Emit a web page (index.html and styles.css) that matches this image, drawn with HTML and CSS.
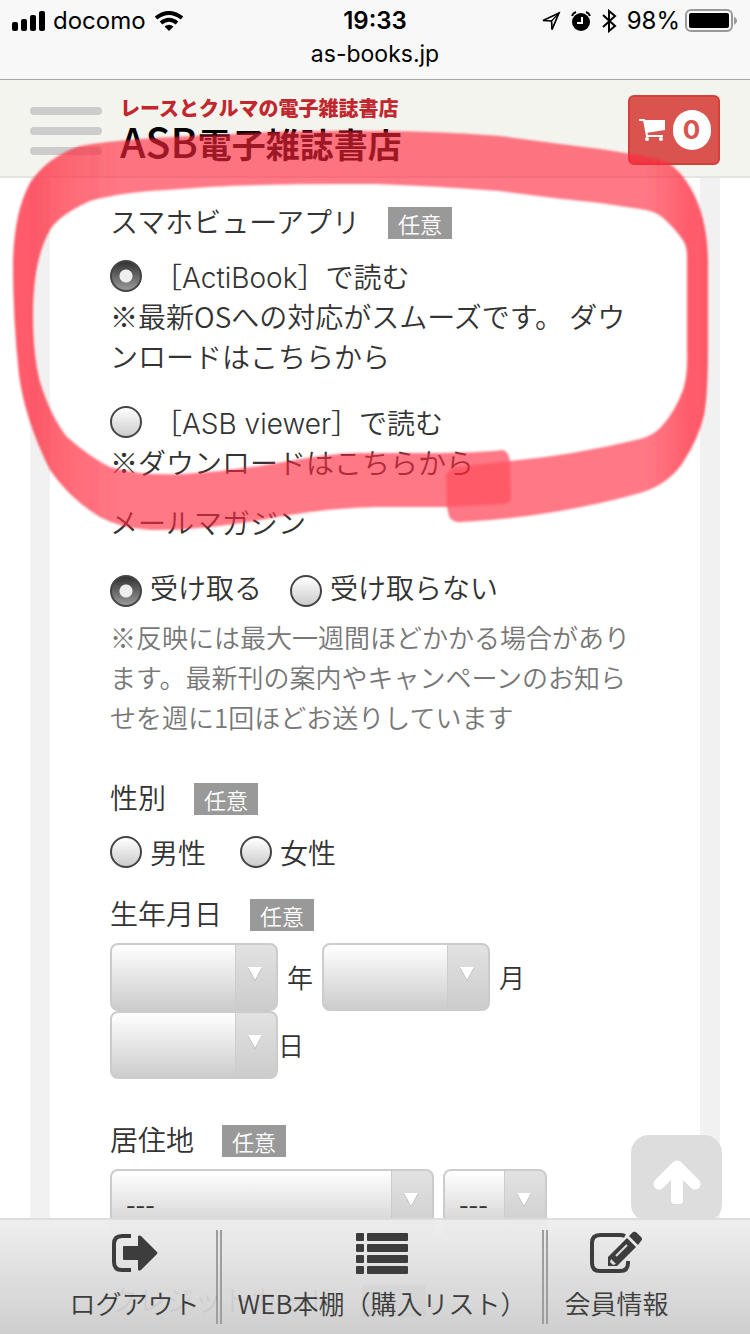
FILE: index.html
```html
<!DOCTYPE html>
<html lang="ja">
<head>
    <meta charset="UTF-8">
    <meta name="viewport" content="width=device-width, initial-scale=1.0">
    <title>ASB電子雑誌書店</title>
    <link rel="stylesheet" href="styles.css">
</head>
<body>
    <div class="browser-bar">
        <div class="status">
            <div class="status-left">
                <svg width="34" height="20" viewBox="0 0 34 20">
                    <rect x="0" y="11" width="6" height="9" rx="2"/>
                    <rect x="9" y="8" width="6" height="12" rx="2"/>
                    <rect x="18" y="4" width="6" height="16" rx="2"/>
                    <rect x="27" y="0" width="6" height="20" rx="2"/>
                </svg>
                <span class="carrier">docomo</span>
                <svg width="28" height="20" viewBox="0 0 28 20">
                    <path d="M1 7Q14-3 27 7M6 12Q14 5.500 22 12" fill="none" stroke="#000" stroke-width="4"/>
                    <path d="M9.500 15.500Q14 12 18.500 15.500L14 20z"/>
                </svg>
            </div>
            <div class="clock">19:33</div>
            <div class="status-right">
                <svg width="20" height="20" viewBox="0 0 20 20">
                    <path d="M18 2L2 9.500L10.500 10L11 18.500z" fill="none" stroke="#000" stroke-width="1.500"/>
                    <path d="M18 2L10.500 10L11 18.500z" fill="none" stroke="#000" stroke-width="1.200"/>
                </svg>
                <svg width="20" height="20" viewBox="0 0 20 20">
                    <circle cx="10" cy="11" r="9"/>
                    <path d="M1 5Q2 2 5 1M19 5Q18 2 15 1" fill="none" stroke="#000" stroke-width="2"/>
                    <path d="M11 6V12H6" fill="none" stroke="#fff" stroke-width="2"/>
                </svg>
                <svg width="16" height="24" viewBox="0 0 16 24">
                    <path d="M2 6L14 17L8 22V2L14 7L2 18" fill="none" stroke="#000" stroke-width="2"/>
                </svg>
                <span class="battery">98%
                    <svg width="53" height="24" viewBox="0 0 53 24">
                        <rect x="1" y="1" width="46" height="21" rx="5" fill="none" stroke="#999" stroke-width="2"/>
                        <rect x="4" y="4" width="40" height="15" rx="2"/>
                        <path d="M49 8Q52 9 52 12Q52 14 49 16z" fill="#999"/>
                    </svg>
                </span>
            </div>
        </div>
        <div class="address">as-books.jp</div>
    </div>

    <header class="header">
        <button type="button" class="menu-button" aria-label="メニュー">
            <span></span><span></span><span></span>
        </button>
        <a href="#" class="logo">
            <span class="logo-catch">レースとクルマの電子雑誌書店</span>
            <span class="logo-name"><span class="logo-asb">ASB</span>電子雑誌書店</span>
        </a>
        <button type="button" class="cart-button" aria-label="カート">
            <svg width="28" height="24" viewBox="0 0 28 24">
                <path d="M1 2H6L9 18H25" fill="none" stroke="#fff" stroke-width="2"/>
                <path d="M6 2H27V12L8 15z" fill="#fff"/>
                <circle cx="9" cy="21" r="2" fill="#fff"/>
                <circle cx="23" cy="21" r="2" fill="#fff"/>
            </svg>
            <span class="cart-count">0</span>
        </button>
    </header>

    <form class="panel">
        <h2 class="field-title">スマホビューアプリ<span class="optional">任意</span></h2>
        <div class="viewer">
            <label class="choice">
                <input type="radio" name="viewer" checked>
                <span>［<span class="app-name">ActiBook</span>］で読む</span>
            </label>
            <p>※最新OSへの対応がスムーズです。 ダウンロードはこちらから</p>
        </div>
        <div class="viewer">
            <label class="choice">
                <input type="radio" name="viewer">
                <span>［<span class="app-name">ASB viewer</span>］で読む</span>
            </label>
            <p>※ダウンロードはこちらから</p>
        </div>

        <h2 class="field-title">メールマガジン</h2>
        <div class="choices magazine">
            <label class="choice"><input type="radio" name="magazine" checked>受け取る</label>
            <label class="choice"><input type="radio" name="magazine">受け取らない</label>
        </div>
        <p class="note">※反映には最大一週間ほどかかる場合があります。最新刊の案内やキャンペーンのお知らせを週に1回ほどお送りしています</p>

        <h2 class="field-title">性別<span class="optional">任意</span></h2>
        <div class="choices gender">
            <label class="choice"><input type="radio" name="gender">男性</label>
            <label class="choice"><input type="radio" name="gender">女性</label>
        </div>

        <h2 class="field-title">生年月日<span class="optional">任意</span></h2>
        <div class="birthday">
            <span class="select"><select id="year" aria-label="年"><option></option></select></span>
            <label for="year">年</label>
            <span class="select"><select id="month" aria-label="月"><option></option></select></span>
            <label for="month">月</label>
            <span class="day">
                <span class="select"><select id="day" aria-label="日"><option></option></select></span>
                <label for="day">日</label>
            </span>
        </div>

        <h2 class="field-title">居住地<span class="optional">任意</span></h2>
        <div class="address-row">
            <span class="select select-wide"><select aria-label="都道府県"><option>---</option></select></span>
            <span class="select select-small"><select aria-label="地域"><option>---</option></select></span>
        </div>

        <h2 class="field-title">クレジットカード<span class="optional">任意</span></h2>
    </form>

    <a href="#" class="page-top" aria-label="ページの先頭へ">
        <svg width="48" height="46" viewBox="0 0 48 46">
            <path d="M18 14H30V41Q30 45 26 45H22Q18 45 18 41z" fill="#fff"/>
            <path d="M6 25L24 7L42 25" fill="none" stroke="#fff" stroke-width="11" stroke-linecap="round" stroke-linejoin="round"/>
        </svg>
    </a>

    <nav class="bottom-nav">
        <a href="#">
            <svg width="48" height="44" viewBox="0 0 48 44">
                <path d="M20 5H11Q3 5 3 13V31Q3 39 11 39H20" fill="none" stroke="#333" stroke-width="4"/>
                <path d="M13 15H27V5Q28 4 30 5L46 21Q47 22 46 23L30 39Q28 40 27 39V29H13Q12 29 12 28V16Q12 15 13 15z" fill="#333"/>
            </svg>
            ログアウト
        </a>
        <a href="#">
            <svg width="52" height="44" viewBox="0 0 52 44" fill="#333">
                <rect x="0" y="2" width="8" height="8" rx="1"/><rect x="11" y="2" width="41" height="8" rx="1"/>
                <rect x="0" y="13" width="8" height="8" rx="1"/><rect x="11" y="13" width="41" height="8" rx="1"/>
                <rect x="0" y="24" width="8" height="8" rx="1"/><rect x="11" y="24" width="41" height="8" rx="1"/>
                <rect x="0" y="35" width="8" height="8" rx="1"/><rect x="11" y="35" width="41" height="8" rx="1"/>
            </svg>
            WEB本棚（購入リスト）
        </a>
        <a href="#">
            <svg width="54" height="44" viewBox="0 0 54 44">
                <path d="M36 5Q34 4 31 4H11Q3 4 3 12V32Q3 40 11 40H31Q39 40 39 32V30" fill="none" stroke="#333" stroke-width="4"/>
                <path d="M19 35V26L38 7L47 16L28 35z" fill="#333"/>
                <path d="M40 5L44 1Q46 0 48 2L52 6Q54 8 52 10L49 14z" fill="#333"/>
                <path d="M22 28L27 33L24 34L21 31z" fill="#ddd"/>
                <path d="M27 25L38 14" stroke="#ddd" stroke-width="2"/>
            </svg>
            会員情報
        </a>
    </nav>

    <!-- red marker round the viewer setting -->
    <svg class="marker" width="750" height="560" viewBox="0 0 750 560">
        <defs>
            <linearGradient id="ink" gradientUnits="userSpaceOnUse" x1="0" y1="0" x2="750" y2="0">
                <stop offset="0.04" stop-opacity="0.76" stop-color="#ff283c"/>
                <stop offset="0.16" stop-opacity="0.62" stop-color="#ff283c"/>
                <stop offset="0.86" stop-opacity="0.62" stop-color="#ff283c"/>
                <stop offset="0.92" stop-opacity="0.76" stop-color="#ff283c"/>
            </linearGradient>
            <filter id="soft"><feGaussianBlur stdDeviation="1"/></filter>
        </defs>
        <g filter="url(#soft)">
            <path fill="url(#ink)" d="M449 516Q452 523 462 522Q508 520 560 511Q605 503 640 493Q667 485 682 464Q699 438 704 415Q708 395 708 345V260Q707 215 690 187Q680 170 668 163Q655 157 600 149Q545 142 500 136Q435 131 375 131Q290 130 220 135Q125 138 80 146Q47 157 30 183Q14 212 13 263Q13 320 19 375Q25 420 50 470Q70 499 100 517Q120 528 150 530Q205 531 283 516Q330 508 375 507H447z
                M375 184Q435 186 500 191Q550 198 600 203L640 209Q655 211 662 217Q676 229 684 242Q687 247 687 258V350Q688 375 683 390Q675 412 661 427Q654 435 640 439Q575 455 510 461Q508 450 502 450Q480 453 430 453H360Q333 453 283 462Q233 471 183 474Q140 476 110 467Q91 458 67 437Q51 417 40 382Q33 355 33 315Q33 260 50 230Q59 215 90 201Q122 192 167 190Q240 183 375 184z" fill-rule="evenodd"/>
            <path fill="#ff283c" fill-opacity="0.38" d="M446 475Q449 467 465 466L510 461L511 497Q511 503 504 504L447 507z"/>
        </g>
    </svg>
</body>
</html>
```
FILE: styles.css
```css
* {
    margin: 0;
    padding: 0;
    box-sizing: border-box;
}

body {
    font-family: "Noto Sans CJK JP", sans-serif;
    font-size: 28px;
    font-weight: 350;
    line-height: 40px;
    color: #333;
    background-color: #fff;
}

a {
    color: inherit;
    text-decoration: none;
}

button {
    font: inherit;
    cursor: pointer;
}

/* phone and browser bar */
.browser-bar {
    padding: 8px 12px 12px;
    background-color: #f8f8f8;
    border-bottom: 1px solid #a7a7a7;
    font-family: Inter, sans-serif;
    font-size: 24px;
    font-weight: 400;
    line-height: 25px;
    color: #000;
}

.status {
    display: grid;
    grid-template-columns: 1fr auto 1fr;
    align-items: center;
    height: 25px;
}

.status-left,
.status-right {
    display: flex;
    align-items: center;
    gap: 7px;
}

.carrier {
    margin-right: 2px;
}

.status-right {
    justify-content: flex-end;
    gap: 10px;
}

.battery {
    display: flex;
    align-items: center;
    gap: 5px;
}

.clock {
    font-weight: 600;
}

.address {
    padding-top: 9px;
    font-size: 23px;
    text-align: center;
}

/* site header */
.header {
    display: flex;
    align-items: center;
    height: 98px;
    padding: 0 30px;
    background-color: #f4f4ef;
    border-bottom: 2px solid #e4e4e0;
}

.menu-button {
    display: flex;
    flex-direction: column;
    gap: 12px;
    width: 72px;
    padding-top: 6px;
    background: none;
    border: none;
}

.menu-button span {
    height: 8px;
    border-radius: 4px;
    background-color: #ccc;
}

.logo {
    display: flex;
    flex-direction: column;
    margin-left: 18px;
    padding-top: 4px;
    font-weight: 700;
}

.logo-catch {
    font-size: 20px;
    font-weight: 900;
    line-height: 24px;
    color: #c1272d;
}

.logo-name {
    font-size: 34px;
    line-height: 40px;
    color: #000;
}

.logo-asb {
    font-size: 41px;
    font-weight: 500;
}

.cart-button {
    display: flex;
    align-items: center;
    justify-content: center;
    gap: 7px;
    width: 92px;
    height: 70px;
    margin: 4px 0 0 auto;
    background-color: #d9534f;
    border: 2px solid #d43f3a;
    border-radius: 6px;
}

.cart-count {
    width: 38px;
    height: 40px;
    border-radius: 20px;
    background-color: #fff;
    font-family: Inter, sans-serif;
    font-size: 26px;
    font-weight: 700;
    line-height: 40px;
    color: #d9534f;
}

/* member form */
.panel {
    margin: 0 30px;
    padding: 23px 60px 12px;
    border: solid #f1f1f1;
    border-width: 0 20px;
}

.field-title {
    display: flex;
    align-items: center;
    gap: 28px;
    font-size: 28px;
    font-weight: 350;
}

.optional {
    margin-top: 4px;
    padding: 0 10px;
    background-color: #999;
    font-size: 22px;
    line-height: 32px;
    color: #fff;
}

.viewer {
    margin: 15px 0 26px;
}

.viewer + .viewer {
    margin-bottom: 20px;
}

.choice {
    display: flex;
    align-items: center;
    gap: 8px;
}

.viewer .choice {
    gap: 12px;
}

.app-name {
    font-family: Inter, sans-serif;
    line-height: 28px;
}

.choices {
    display: flex;
    gap: 28px;
}

.choices.magazine {
    margin: 25px 0 10px;
}

.choices.magazine input {
    margin-top: 8px;
}

.choices.gender {
    gap: 34px;
    margin: 15px 0 21px;
}

input[type="radio"] {
    appearance: none;
    width: 32px;
    height: 32px;
    border: 2px solid #444;
    border-radius: 50%;
    background: linear-gradient(#fff, #ccc);
}

input[type="radio"]:checked {
    background: radial-gradient(circle, #eee 6px, transparent 7px), linear-gradient(#333, #999);
}

.note {
    margin-bottom: 40px;
    font-size: 26px;
    color: #777;
}

.birthday {
    display: flex;
    flex-wrap: wrap;
    align-items: center;
    column-gap: 9px;
    margin: 10px 0 40px;
    font-size: 26px;
}

.day {
    display: flex;
    align-items: center;
}

.select {
    position: relative;
    width: 168px;
}

.select select {
    display: block;
    appearance: none;
    width: 100%;
    height: 68px;
    padding: 0 14px;
    border: 2px solid #ccc;
    border-radius: 8px;
    background:
        linear-gradient(#ccc, #ccc) right 40px top / 1px 100% no-repeat,
        linear-gradient(#e2e2e2, #ccc) right / 40px 100% no-repeat,
        linear-gradient(#fff, #ccc);
    font: inherit;
    font-size: 28px;
    color: #333;
}

/* arrow of the drop-down */
.select::after {
    content: "";
    position: absolute;
    top: 24px;
    right: 16px;
    border: 7px solid transparent;
    border-top: 13px solid #fff;
    filter: drop-shadow(0 1px 0 #aaa);
    pointer-events: none;
}

.address-row {
    display: flex;
    gap: 9px;
    margin: 10px 0 42px;
}

.select-wide {
    width: 324px;
}

.select-small {
    width: 104px;
}

.page-top {
    position: fixed;
    right: 28px;
    bottom: 112px;
    display: flex;
    align-items: center;
    justify-content: center;
    width: 91px;
    height: 87px;
    padding-top: 6px;
    border-radius: 18px;
    background-color: #ddd;
}

.bottom-nav {
    position: fixed;
    left: 0;
    right: 0;
    bottom: 0;
    display: flex;
    justify-content: center;
    height: 116px;
    padding: 10px 12px 10px 0;
    border-top: 2px solid #ddd;
    background: linear-gradient(#eee, #ccc);
    opacity: 0.95;
}

.bottom-nav a {
    display: flex;
    flex-direction: column;
    align-items: center;
    gap: 8px;
    padding: 1px 16px 0;
    font-size: 26px;
}

.bottom-nav a + a {
    border-left: 6px double #999;
}

.marker {
    position: absolute;
    top: 0;
    left: 0;
    pointer-events: none;
}
```
